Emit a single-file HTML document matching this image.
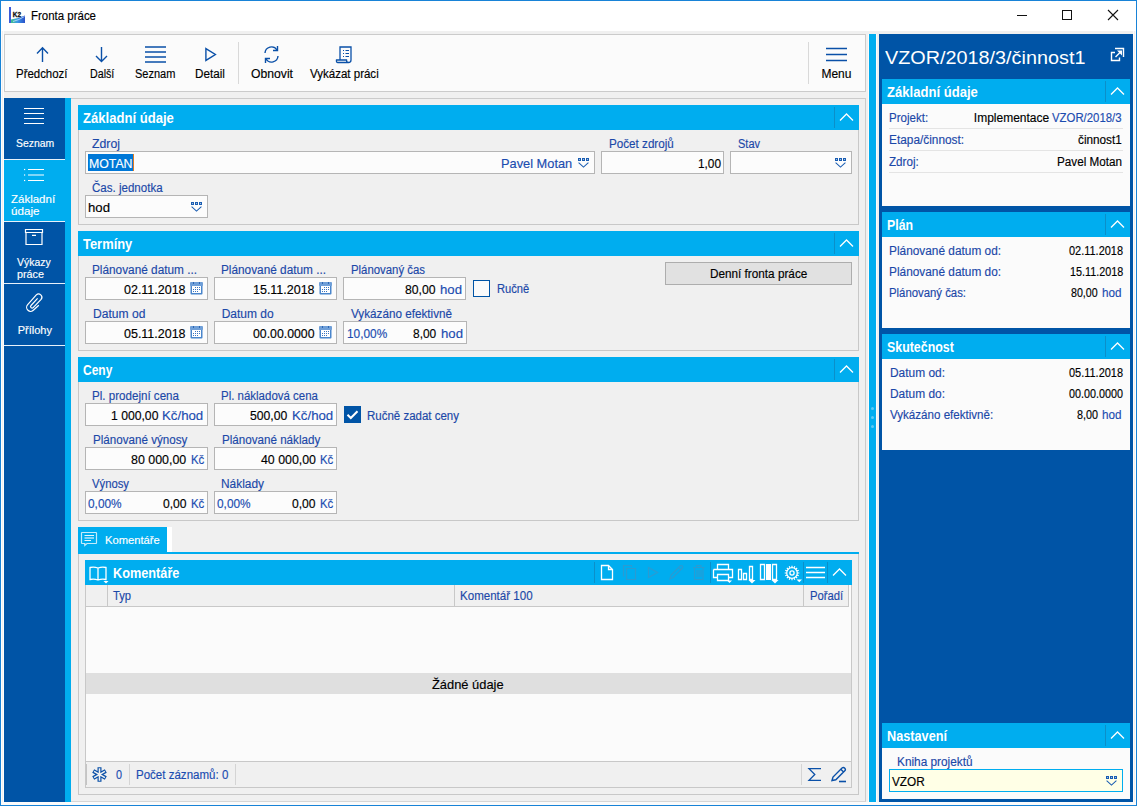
<!DOCTYPE html>
<html><head><meta charset="utf-8"><style>
html,body{margin:0;padding:0;width:1137px;height:806px;overflow:hidden;background:#f0f0f0}
body{position:relative;font-family:"Liberation Sans",sans-serif}
div,svg{position:absolute;box-sizing:border-box}
.t{white-space:nowrap;-webkit-text-stroke:0.15px currentColor}
</style></head><body>
<div style="left:0px;top:0px;width:1137px;height:806px;background:#f0f0f0;border:1px solid #1883d7;box-sizing:border-box"></div>
<div style="left:1px;top:1px;width:1135px;height:30px;background:#fff"></div>
<div style="left:1px;top:802px;width:1135px;height:3px;background:#fbfbfb"></div>
<div style="left:1px;top:31px;width:3px;height:771px;background:#fcfcfc"></div>
<div style="left:2px;top:31px;width:1px;height:771px;background:#f0f0f0"></div>
<div style="left:1133px;top:31px;width:3px;height:771px;background:#fcfcfc"></div>
<div style="left:1134px;top:31px;width:1px;height:771px;background:#f0f0f0"></div>
<svg style="left:9px;top:7px;" width="16" height="16" viewBox="0 0 16 16"><rect x="0" y="0" width="2" height="16" fill="#3a5bd9"/><defs><linearGradient id="g1" x1="0" y1="0" x2="1" y2="0"><stop offset="0" stop-color="#3fc28a"/><stop offset="0.45" stop-color="#3a9ae8"/><stop offset="1" stop-color="#2a4fc9"/></linearGradient></defs><path d="M2 12.5 Q9 11.5 16 8.5 L16 16 L2 16 Z" fill="url(#g1)"/><path d="M4 14.5 Q10 13 15.5 9.5" stroke="#d8ecff" stroke-width="0.9" fill="none" opacity="0.8"/><text x="3.8" y="10.4" font-family="Liberation Sans" font-weight="bold" font-size="6.4" fill="#111" stroke="#111" stroke-width="0.3">K2</text></svg>
<div class="t" style="left:30.80px;top:10px;font-size:12px;line-height:12px;color:#000;transform-origin:0 0;transform:scaleX(0.9552);">Fronta práce</div>
<div style="left:1017px;top:15px;width:10px;height:1px;background:#111"></div>
<div style="left:1062px;top:10px;width:10px;height:10px;border:1px solid #111;box-sizing:border-box"></div>
<svg style="left:1107px;top:9px;" width="12" height="12" viewBox="0 0 12 12"><path d="M1 1 L11 11 M11 1 L1 11" stroke="#111" stroke-width="1.1" fill="none"/></svg>
<div style="left:4px;top:34px;width:862px;height:58px;background:#fbfbfb;border:1px solid #cbcbcb;box-sizing:border-box"></div>
<div class="t" style="left:16.20px;top:68px;font-size:12px;line-height:12px;color:#000;transform-origin:0 0;transform:scaleX(0.9528);">Předchozí</div>
<div class="t" style="left:89.70px;top:68px;font-size:12px;line-height:12px;color:#000;transform-origin:0 0;transform:scaleX(0.8885);">Další</div>
<div class="t" style="left:135.00px;top:68px;font-size:12px;line-height:12px;color:#000;transform-origin:0 0;transform:scaleX(0.9182);">Seznam</div>
<div class="t" style="left:195.00px;top:68px;font-size:12px;line-height:12px;color:#000;transform-origin:0 0;transform:scaleX(0.9739);">Detail</div>
<div class="t" style="left:250.60px;top:68px;font-size:12px;line-height:12px;color:#000;transform-origin:0 0;transform:scaleX(1.0157);">Obnovit</div>
<div class="t" style="left:310.00px;top:68px;font-size:12px;line-height:12px;color:#000;transform-origin:0 0;transform:scaleX(0.9595);">Vykázat práci</div>
<div class="t" style="left:821.40px;top:68px;font-size:12px;line-height:12px;color:#000;transform-origin:0 0;">Menu</div>
<div style="left:238px;top:42px;width:1px;height:42px;background:#d9d9d9"></div>
<div style="left:808px;top:42px;width:1px;height:42px;background:#d9d9d9"></div>
<svg style="left:36px;top:46px;" width="14" height="17" viewBox="0 0 14 17"><path d="M6.5 1.5 V16 M1 7.5 L6.5 1.8 L12 7.5" stroke="#0a50a8" stroke-width="1.4" fill="none"/></svg>
<svg style="left:95px;top:46px;" width="14" height="17" viewBox="0 0 14 17"><path d="M6.5 1 V15.5 M1 10 L6.5 15.5 L12 10" stroke="#0a50a8" stroke-width="1.4" fill="none"/></svg>
<svg style="left:144px;top:45px;" width="24" height="19" viewBox="0 0 24 19"><path d="M1 2 H22 M1 7 H22 M1 12 H22 M1 17 H22" stroke="#0a50a8" stroke-width="1.4" fill="none"/></svg>
<svg style="left:203px;top:47px;" width="15" height="16" viewBox="0 0 15 16"><path d="M2.9 1.6 L12.4 7.5 L2.9 13.4 Z" stroke="#0a50a8" stroke-width="1.4" fill="none"/></svg>
<svg style="left:262px;top:45px;" width="19" height="19" viewBox="0 0 19 19"><path d="M3 8 A6.5 6.5 0 0 1 15 5 M16 11 A6.5 6.5 0 0 1 4 14" stroke="#0a50a8" stroke-width="1.4" fill="none"/><path d="M15.5 1 V5.5 H11 M3.5 18 V13.5 H8" stroke="#0a50a8" stroke-width="1.4" fill="none"/></svg>
<svg style="left:335px;top:45px;" width="19" height="19" viewBox="0 0 19 19"><path d="M5 15 V2 H16 V15 Q16 17.5 13.5 17.5 H3 Q1 17.5 1.5 15 Z M13.5 17.5 Q11.5 17.5 11.5 15 H5" stroke="#0a50a8" stroke-width="1.3" fill="none"/><path d="M8 5.5H9 M10.5 5.5H14 M8 8.5H9 M10.5 8.5H14 M8 11.5H9 M10.5 11.5H14" stroke="#0a50a8" stroke-width="1.2"/></svg>
<svg style="left:825px;top:46px;" width="24" height="17" viewBox="0 0 24 17"><path d="M1 2.5 H22 M1 8.5 H22 M1 14.5 H22" stroke="#0a50a8" stroke-width="1.4" fill="none"/></svg>
<div style="left:4px;top:98px;width:61px;height:704px;background:#0054a6"></div>
<div style="left:65px;top:98px;width:6px;height:704px;background:#00adef"></div>
<div style="left:4px;top:160px;width:67px;height:61px;background:#00adef"></div>
<div style="left:4px;top:159px;width:61px;height:1px;background:#e8f1fa"></div>
<div style="left:4px;top:221px;width:61px;height:1px;background:#e8f1fa"></div>
<div style="left:4px;top:283px;width:61px;height:1px;background:#e8f1fa"></div>
<div style="left:4px;top:345px;width:61px;height:1px;background:#e8f1fa"></div>
<svg style="left:24px;top:107px;" width="21" height="18" viewBox="0 0 21 18"><path d="M0 1.5 H20 M0 6.5 H20 M0 11.5 H20 M0 16.5 H20" stroke="#fff" stroke-width="1.2" fill="none"/></svg>
<div class="t" style="left:15.60px;top:138px;font-size:11px;line-height:11px;color:#fff;transform-origin:0 0;transform:scaleX(0.9467);">Seznam</div>
<svg style="left:22px;top:167px;" width="23" height="16" viewBox="0 0 23 16"><path d="M6 2.5 H22 M6 8 H22 M6 13.5 H22" stroke="#fff" stroke-width="1.2" fill="none"/><rect x="2" y="1.9" width="1.2" height="1.2" fill="#fff"/><rect x="2" y="7.4" width="1.2" height="1.2" fill="#fff"/><rect x="2" y="12.9" width="1.2" height="1.2" fill="#fff"/></svg>
<div class="t" style="left:11.20px;top:194px;font-size:11px;line-height:11px;color:#fff;transform-origin:0 0;transform:scaleX(1.0450);">Základní</div>
<div class="t" style="left:11.00px;top:206px;font-size:11px;line-height:11px;color:#fff;transform-origin:0 0;transform:scaleX(1.0558);">údaje</div>
<svg style="left:24px;top:228px;" width="21" height="19" viewBox="0 0 21 19"><path d="M1.5 1.5 H18.5 V4.5 H1.5 Z M2 4.5 V16.5 H18 V4.5 M8 7.3 H12" stroke="#fff" stroke-width="1.2" fill="none"/></svg>
<div class="t" style="left:16.60px;top:257px;font-size:11px;line-height:11px;color:#fff;transform-origin:0 0;transform:scaleX(0.9478);">Výkazy</div>
<div class="t" style="left:16.70px;top:269px;font-size:11px;line-height:11px;color:#fff;transform-origin:0 0;transform:scaleX(0.9818);">práce</div>
<svg style="left:25px;top:292px;" width="19" height="21" viewBox="0 0 19 21"><path d="M13.8 13.2 L8.6 18 A3.9 3.9 0 0 1 2.7 12.6 L11.3 2.9 A3.3 3.3 0 0 1 16.1 7.4 L8.2 15.6 A1.5 1.5 0 0 1 6 13.5 L12.6 6.3" stroke="#fff" stroke-width="1.2" fill="none"/></svg>
<div class="t" style="left:17.70px;top:325px;font-size:11px;line-height:11px;color:#fff;transform-origin:0 0;">Přílohy</div>
<div style="left:71px;top:98px;width:795px;height:704px;background:#f0f0f0;border-top:1px solid #cbcbcb;border-right:1px solid #cbcbcb;border-bottom:1px solid #d6d6d6"></div>
<div style="left:78px;top:105px;width:781px;height:120px;background:#f0f0f0;border:1px solid #c8c8c8"></div>
<div style="left:78px;top:105px;width:781px;height:25px;background:#00adef"></div>
<div style="left:834px;top:107px;width:1px;height:21px;background:#0b8fc9"></div>
<svg style="left:839px;top:113px;" width="15" height="9" viewBox="0 0 15 9"><path d="M1 7.5 L7.5 1 L14 7.5" stroke="#fff" stroke-width="1.3" fill="none"/></svg>
<div class="t" style="left:82.50px;top:112px;font-size:13px;line-height:13px;color:#fff;font-weight:bold;-webkit-text-stroke:0;transform-origin:0 11px;transform:scaleX(1.0055) scaleY(1.1);">Základní údaje</div>
<div class="t" style="left:92.00px;top:138px;font-size:12px;line-height:12px;color:#1b48a8;transform-origin:0 0;transform:scaleX(1.0238);">Zdroj</div>
<div style="left:85px;top:151px;width:510px;height:23px;background:#fcfcfc;border:1px solid #b5b5b5;"></div>
<div style="left:88px;top:154px;width:45px;height:17px;background:#0078d7"></div>
<div style="left:133px;top:154px;width:1px;height:17px;background:#e07b20"></div>
<div class="t" style="left:88.50px;top:158px;font-size:12px;line-height:12px;color:#fff;transform-origin:0 0;transform:scaleX(1.0247);">MOTAN</div>
<div class="t" style="left:500.60px;top:157px;font-size:13px;line-height:13px;color:#1b4cb0;transform-origin:0 0;transform:scaleX(0.9855);">Pavel Motan</div>
<svg style="left:578px;top:158px;" width="11" height="11" viewBox="0 0 11 11"><rect x="0" y="0" width="3" height="3" fill="#1a5db2"/><rect x="1" y="1" width="1" height="1" fill="#9fbfe6"/><rect x="4" y="0" width="3" height="3" fill="#1a5db2"/><rect x="5" y="1" width="1" height="1" fill="#9fbfe6"/><rect x="8" y="0" width="3" height="3" fill="#1a5db2"/><rect x="9" y="1" width="1" height="1" fill="#9fbfe6"/><path d="M0.6 4.6 L5.5 9.1 L10.4 4.6" stroke="#1a5db2" stroke-width="1.05" fill="none"/></svg>
<div class="t" style="left:608.70px;top:138px;font-size:12px;line-height:12px;color:#1b48a8;transform-origin:0 0;transform:scaleX(0.9715);">Počet zdrojů</div>
<div style="left:601px;top:151px;width:123px;height:23px;background:#fcfcfc;border:1px solid #b5b5b5;"></div>
<div class="t" style="left:697.60px;top:158px;font-size:12px;line-height:12px;color:#000;transform-origin:0 0;transform:scaleX(0.9850);">1,00</div>
<div class="t" style="left:737.50px;top:138px;font-size:12px;line-height:12px;color:#1b48a8;transform-origin:0 0;transform:scaleX(0.9167);">Stav</div>
<div style="left:730px;top:151px;width:122px;height:23px;background:#fcfcfc;border:1px solid #b5b5b5;"></div>
<svg style="left:835px;top:158px;" width="11" height="11" viewBox="0 0 11 11"><rect x="0" y="0" width="3" height="3" fill="#1a5db2"/><rect x="1" y="1" width="1" height="1" fill="#9fbfe6"/><rect x="4" y="0" width="3" height="3" fill="#1a5db2"/><rect x="5" y="1" width="1" height="1" fill="#9fbfe6"/><rect x="8" y="0" width="3" height="3" fill="#1a5db2"/><rect x="9" y="1" width="1" height="1" fill="#9fbfe6"/><path d="M0.6 4.6 L5.5 9.1 L10.4 4.6" stroke="#1a5db2" stroke-width="1.05" fill="none"/></svg>
<div class="t" style="left:92.00px;top:182px;font-size:12px;line-height:12px;color:#1b48a8;transform-origin:0 0;transform:scaleX(0.9619);">Čas. jednotka</div>
<div style="left:85px;top:195px;width:123px;height:23px;background:#fcfcfc;border:1px solid #b5b5b5;"></div>
<div class="t" style="left:88.20px;top:201px;font-size:13px;line-height:13px;color:#000;transform-origin:0 0;transform:scaleX(1.0138);">hod</div>
<svg style="left:191px;top:202px;" width="11" height="11" viewBox="0 0 11 11"><rect x="0" y="0" width="3" height="3" fill="#1a5db2"/><rect x="1" y="1" width="1" height="1" fill="#9fbfe6"/><rect x="4" y="0" width="3" height="3" fill="#1a5db2"/><rect x="5" y="1" width="1" height="1" fill="#9fbfe6"/><rect x="8" y="0" width="3" height="3" fill="#1a5db2"/><rect x="9" y="1" width="1" height="1" fill="#9fbfe6"/><path d="M0.6 4.6 L5.5 9.1 L10.4 4.6" stroke="#1a5db2" stroke-width="1.05" fill="none"/></svg>
<div style="left:78px;top:231px;width:781px;height:120px;background:#f0f0f0;border:1px solid #c8c8c8"></div>
<div style="left:78px;top:231px;width:781px;height:25px;background:#00adef"></div>
<div style="left:834px;top:233px;width:1px;height:21px;background:#0b8fc9"></div>
<svg style="left:839px;top:239px;" width="15" height="9" viewBox="0 0 15 9"><path d="M1 7.5 L7.5 1 L14 7.5" stroke="#fff" stroke-width="1.3" fill="none"/></svg>
<div class="t" style="left:82.50px;top:238px;font-size:13px;line-height:13px;color:#fff;font-weight:bold;-webkit-text-stroke:0;transform-origin:0 11px;transform:scaleX(0.9940) scaleY(1.1);">Termíny</div>
<div class="t" style="left:92.00px;top:264px;font-size:12px;line-height:12px;color:#1b48a8;transform-origin:0 0;transform:scaleX(0.9836);">Plánované datum ...</div>
<div class="t" style="left:221.40px;top:264px;font-size:12px;line-height:12px;color:#1b48a8;transform-origin:0 0;transform:scaleX(0.9836);">Plánované datum ...</div>
<div class="t" style="left:350.50px;top:264px;font-size:12px;line-height:12px;color:#1b48a8;transform-origin:0 0;transform:scaleX(0.9481);">Plánovaný čas</div>
<div style="left:85px;top:277px;width:123px;height:23px;background:#fcfcfc;border:1px solid #b5b5b5;"></div>
<div class="t" style="left:123.80px;top:284px;font-size:12px;line-height:12px;color:#000;transform-origin:0 0;transform:scaleX(1.0397);">02.11.2018</div>
<svg style="left:190px;top:282px;" width="13" height="13" viewBox="0 0 13 13"><rect x="0.5" y="0.5" width="12" height="12" rx="1" fill="#4a86cc"/><rect x="0" y="0" width="13" height="4" rx="1" fill="#6f9fd8"/><rect x="2" y="4" width="9" height="7" fill="#fff"/><rect x="5" y="5" width="1" height="1" fill="#3a74c0"/><rect x="7" y="5" width="1" height="1" fill="#3a74c0"/><rect x="9" y="5" width="1" height="1" fill="#3a74c0"/><rect x="3" y="7" width="1" height="1" fill="#3a74c0"/><rect x="5" y="7" width="1" height="1" fill="#3a74c0"/><rect x="7" y="7" width="1" height="1" fill="#3a74c0"/><rect x="9" y="7" width="1" height="1" fill="#3a74c0"/><rect x="3" y="9" width="1" height="1" fill="#3a74c0"/><rect x="5" y="9" width="1" height="1" fill="#3a74c0"/><rect x="7" y="9" width="1" height="1" fill="#3a74c0"/><rect x="3" y="0" width="1" height="2" fill="#2d66b3"/><rect x="9" y="0" width="1" height="2" fill="#2d66b3"/></svg>
<div style="left:214px;top:277px;width:123px;height:23px;background:#fcfcfc;border:1px solid #b5b5b5;"></div>
<div class="t" style="left:252.80px;top:284px;font-size:12px;line-height:12px;color:#000;transform-origin:0 0;transform:scaleX(1.0397);">15.11.2018</div>
<svg style="left:319px;top:282px;" width="13" height="13" viewBox="0 0 13 13"><rect x="0.5" y="0.5" width="12" height="12" rx="1" fill="#4a86cc"/><rect x="0" y="0" width="13" height="4" rx="1" fill="#6f9fd8"/><rect x="2" y="4" width="9" height="7" fill="#fff"/><rect x="5" y="5" width="1" height="1" fill="#3a74c0"/><rect x="7" y="5" width="1" height="1" fill="#3a74c0"/><rect x="9" y="5" width="1" height="1" fill="#3a74c0"/><rect x="3" y="7" width="1" height="1" fill="#3a74c0"/><rect x="5" y="7" width="1" height="1" fill="#3a74c0"/><rect x="7" y="7" width="1" height="1" fill="#3a74c0"/><rect x="9" y="7" width="1" height="1" fill="#3a74c0"/><rect x="3" y="9" width="1" height="1" fill="#3a74c0"/><rect x="5" y="9" width="1" height="1" fill="#3a74c0"/><rect x="7" y="9" width="1" height="1" fill="#3a74c0"/><rect x="3" y="0" width="1" height="2" fill="#2d66b3"/><rect x="9" y="0" width="1" height="2" fill="#2d66b3"/></svg>
<div style="left:343px;top:277px;width:123px;height:23px;background:#fcfcfc;border:1px solid #b5b5b5;"></div>
<div class="t" style="left:405.00px;top:284px;font-size:12px;line-height:12px;color:#000;transform-origin:0 0;transform:scaleX(1.0183);">80,00</div>
<div class="t" style="left:439.70px;top:283px;font-size:13px;line-height:13px;color:#1b4cb0;transform-origin:0 0;transform:scaleX(1.0138);">hod</div>
<div style="left:473px;top:280px;width:17px;height:17px;background:#fbfbfb;border:1px solid #0054a6"></div>
<div class="t" style="left:496.70px;top:283px;font-size:12px;line-height:12px;color:#1b48a8;transform-origin:0 0;transform:scaleX(0.9308);">Ručně</div>
<div style="left:665px;top:262px;width:187px;height:23px;background:#e1e1e1;border:1px solid #adadad"></div>
<div class="t" style="left:709.50px;top:268px;font-size:12px;line-height:12px;color:#000;transform-origin:0 0;transform:scaleX(0.9789);">Denní fronta práce</div>
<div class="t" style="left:92.50px;top:308px;font-size:12px;line-height:12px;color:#1b48a8;transform-origin:0 0;transform:scaleX(1.0067);">Datum od</div>
<div class="t" style="left:221.70px;top:308px;font-size:12px;line-height:12px;color:#1b48a8;transform-origin:0 0;">Datum do</div>
<div class="t" style="left:350.50px;top:308px;font-size:12px;line-height:12px;color:#1b48a8;transform-origin:0 0;transform:scaleX(0.9749);">Vykázáno efektivně</div>
<div style="left:85px;top:321px;width:123px;height:23px;background:#fcfcfc;border:1px solid #b5b5b5;"></div>
<div class="t" style="left:123.80px;top:328px;font-size:12px;line-height:12px;color:#000;transform-origin:0 0;transform:scaleX(1.0397);">05.11.2018</div>
<svg style="left:190px;top:326px;" width="13" height="13" viewBox="0 0 13 13"><rect x="0.5" y="0.5" width="12" height="12" rx="1" fill="#4a86cc"/><rect x="0" y="0" width="13" height="4" rx="1" fill="#6f9fd8"/><rect x="2" y="4" width="9" height="7" fill="#fff"/><rect x="5" y="5" width="1" height="1" fill="#3a74c0"/><rect x="7" y="5" width="1" height="1" fill="#3a74c0"/><rect x="9" y="5" width="1" height="1" fill="#3a74c0"/><rect x="3" y="7" width="1" height="1" fill="#3a74c0"/><rect x="5" y="7" width="1" height="1" fill="#3a74c0"/><rect x="7" y="7" width="1" height="1" fill="#3a74c0"/><rect x="9" y="7" width="1" height="1" fill="#3a74c0"/><rect x="3" y="9" width="1" height="1" fill="#3a74c0"/><rect x="5" y="9" width="1" height="1" fill="#3a74c0"/><rect x="7" y="9" width="1" height="1" fill="#3a74c0"/><rect x="3" y="0" width="1" height="2" fill="#2d66b3"/><rect x="9" y="0" width="1" height="2" fill="#2d66b3"/></svg>
<div style="left:214px;top:321px;width:123px;height:23px;background:#fcfcfc;border:1px solid #b5b5b5;"></div>
<div class="t" style="left:252.80px;top:328px;font-size:12px;line-height:12px;color:#000;transform-origin:0 0;transform:scaleX(1.0241);">00.00.0000</div>
<svg style="left:319px;top:326px;" width="13" height="13" viewBox="0 0 13 13"><rect x="0.5" y="0.5" width="12" height="12" rx="1" fill="#4a86cc"/><rect x="0" y="0" width="13" height="4" rx="1" fill="#6f9fd8"/><rect x="2" y="4" width="9" height="7" fill="#fff"/><rect x="5" y="5" width="1" height="1" fill="#3a74c0"/><rect x="7" y="5" width="1" height="1" fill="#3a74c0"/><rect x="9" y="5" width="1" height="1" fill="#3a74c0"/><rect x="3" y="7" width="1" height="1" fill="#3a74c0"/><rect x="5" y="7" width="1" height="1" fill="#3a74c0"/><rect x="7" y="7" width="1" height="1" fill="#3a74c0"/><rect x="9" y="7" width="1" height="1" fill="#3a74c0"/><rect x="3" y="9" width="1" height="1" fill="#3a74c0"/><rect x="5" y="9" width="1" height="1" fill="#3a74c0"/><rect x="7" y="9" width="1" height="1" fill="#3a74c0"/><rect x="3" y="0" width="1" height="2" fill="#2d66b3"/><rect x="9" y="0" width="1" height="2" fill="#2d66b3"/></svg>
<div style="left:343px;top:321px;width:124px;height:23px;background:#fcfcfc;border:1px solid #b5b5b5;"></div>
<div class="t" style="left:347.00px;top:328px;font-size:12px;line-height:12px;color:#1b4cb0;transform-origin:0 0;transform:scaleX(0.9877);">10,00%</div>
<div class="t" style="left:413.40px;top:328px;font-size:12px;line-height:12px;color:#000;transform-origin:0 0;transform:scaleX(0.9936);">8,00</div>
<div class="t" style="left:440.70px;top:327px;font-size:13px;line-height:13px;color:#1b4cb0;transform-origin:0 0;transform:scaleX(1.0138);">hod</div>
<div style="left:78px;top:357px;width:781px;height:164px;background:#f0f0f0;border:1px solid #c8c8c8"></div>
<div style="left:78px;top:357px;width:781px;height:25px;background:#00adef"></div>
<div style="left:834px;top:359px;width:1px;height:21px;background:#0b8fc9"></div>
<svg style="left:839px;top:365px;" width="15" height="9" viewBox="0 0 15 9"><path d="M1 7.5 L7.5 1 L14 7.5" stroke="#fff" stroke-width="1.3" fill="none"/></svg>
<div class="t" style="left:82.50px;top:364px;font-size:13px;line-height:13px;color:#fff;font-weight:bold;-webkit-text-stroke:0;transform-origin:0 11px;transform:scaleX(0.9214) scaleY(1.1);">Ceny</div>
<div class="t" style="left:92.00px;top:390px;font-size:12px;line-height:12px;color:#1b48a8;transform-origin:0 0;transform:scaleX(0.9656);">Pl. prodejní cena</div>
<div class="t" style="left:221.40px;top:390px;font-size:12px;line-height:12px;color:#1b48a8;transform-origin:0 0;transform:scaleX(0.9561);">Pl. nákladová cena</div>
<div style="left:85px;top:403px;width:123px;height:23px;background:#fcfcfc;border:1px solid #b5b5b5;"></div>
<div class="t" style="left:110.80px;top:410px;font-size:12px;line-height:12px;color:#000;transform-origin:0 0;transform:scaleX(1.0150);">1 000,00</div>
<div class="t" style="left:162.30px;top:409px;font-size:13px;line-height:13px;color:#1b4cb0;transform-origin:0 0;transform:scaleX(1.0185);">Kč/hod</div>
<div style="left:214px;top:403px;width:123px;height:23px;background:#fcfcfc;border:1px solid #b5b5b5;"></div>
<div class="t" style="left:250.10px;top:410px;font-size:12px;line-height:12px;color:#000;transform-origin:0 0;transform:scaleX(1.0163);">500,00</div>
<div class="t" style="left:291.50px;top:409px;font-size:13px;line-height:13px;color:#1b4cb0;transform-origin:0 0;transform:scaleX(1.0185);">Kč/hod</div>
<svg style="left:344px;top:406px;" width="17" height="17" viewBox="0 0 17 17"><rect x="0" y="0" width="17" height="17" fill="#0054a6"/><path d="M3.5 8.8 L6.8 12 L13.5 5.3" stroke="#fff" stroke-width="2" fill="none"/></svg>
<div class="t" style="left:367.00px;top:410px;font-size:12px;line-height:12px;color:#1b48a8;transform-origin:0 0;transform:scaleX(0.9578);">Ručně zadat ceny</div>
<div class="t" style="left:92.50px;top:434px;font-size:12px;line-height:12px;color:#1b48a8;transform-origin:0 0;transform:scaleX(0.9682);">Plánované výnosy</div>
<div class="t" style="left:221.70px;top:434px;font-size:12px;line-height:12px;color:#1b48a8;transform-origin:0 0;transform:scaleX(0.9684);">Plánované náklady</div>
<div style="left:85px;top:447px;width:123px;height:23px;background:#fcfcfc;border:1px solid #b5b5b5;"></div>
<div class="t" style="left:131.40px;top:454px;font-size:12px;line-height:12px;color:#000;transform-origin:0 0;transform:scaleX(1.0356);">80 000,00</div>
<div class="t" style="left:190.60px;top:454px;font-size:12px;line-height:12px;color:#1b4cb0;transform-origin:0 0;transform:scaleX(0.9500);">Kč</div>
<div style="left:214px;top:447px;width:123px;height:23px;background:#fcfcfc;border:1px solid #b5b5b5;"></div>
<div class="t" style="left:260.50px;top:454px;font-size:12px;line-height:12px;color:#000;transform-origin:0 0;transform:scaleX(1.0300);">40 000,00</div>
<div class="t" style="left:319.80px;top:454px;font-size:12px;line-height:12px;color:#1b4cb0;transform-origin:0 0;transform:scaleX(0.9500);">Kč</div>
<div class="t" style="left:92.00px;top:478px;font-size:12px;line-height:12px;color:#1b48a8;transform-origin:0 0;transform:scaleX(0.9403);">Výnosy</div>
<div class="t" style="left:221.40px;top:478px;font-size:12px;line-height:12px;color:#1b48a8;transform-origin:0 0;transform:scaleX(0.9919);">Náklady</div>
<div style="left:85px;top:491px;width:123px;height:23px;background:#fcfcfc;border:1px solid #b5b5b5;"></div>
<div class="t" style="left:88.40px;top:498px;font-size:12px;line-height:12px;color:#1b4cb0;transform-origin:0 0;transform:scaleX(0.9868);">0,00%</div>
<div class="t" style="left:163.20px;top:498px;font-size:12px;line-height:12px;color:#000;transform-origin:0 0;transform:scaleX(1.0107);">0,00</div>
<div class="t" style="left:190.70px;top:498px;font-size:12px;line-height:12px;color:#1b4cb0;transform-origin:0 0;transform:scaleX(0.9500);">Kč</div>
<div style="left:214px;top:491px;width:123px;height:23px;background:#fcfcfc;border:1px solid #b5b5b5;"></div>
<div class="t" style="left:217.20px;top:498px;font-size:12px;line-height:12px;color:#1b4cb0;transform-origin:0 0;transform:scaleX(0.9868);">0,00%</div>
<div class="t" style="left:291.90px;top:498px;font-size:12px;line-height:12px;color:#000;transform-origin:0 0;transform:scaleX(1.0107);">0,00</div>
<div class="t" style="left:319.80px;top:498px;font-size:12px;line-height:12px;color:#1b4cb0;transform-origin:0 0;transform:scaleX(0.9500);">Kč</div>
<div style="left:78px;top:527px;width:89px;height:25px;background:#00adef"></div>
<div style="left:167px;top:527px;width:5px;height:25px;background:#ffffff"></div>
<div style="left:78px;top:552px;width:781px;height:2px;background:#00adef"></div>
<div style="left:78px;top:554px;width:781px;height:241px;background:#f0f0f0;border:1px solid #c8c8c8;border-top:none"></div>
<svg style="left:80px;top:531px;" width="19" height="17" viewBox="0 0 19 17"><path d="M2 1.5 H16 Q16.5 1.5 16.5 2 V12 Q16.5 12.5 16 12.5 H7 L4.8 14.5 V12.5 H2 Q1.5 12.5 1.5 12 V2 Q1.5 1.5 2 1.5 Z" stroke="#c4ebfb" stroke-width="1.2" fill="none"/><path d="M4.5 4.5 H14 M4.5 9.5 H11" stroke="#e8f7fe" stroke-width="1"/><path d="M4.5 7 H14" stroke="#a8e2f9" stroke-width="1.6"/></svg>
<div class="t" style="left:105.20px;top:535px;font-size:11px;line-height:11px;color:#fff;transform-origin:0 0;transform:scaleX(1.0186);">Komentáře</div>
<div style="left:85px;top:560px;width:767px;height:25px;background:#00adef"></div>
<svg style="left:88px;top:565px;" width="22" height="20" viewBox="0 0 22 20"><path d="M10 3 Q6 1.5 2 2.5 V14.5 Q6 13.5 10 15 Q14 13.5 18 14.5 V2.5 Q14 1.5 10 3 Z M10 3 V15" stroke="#fff" stroke-width="1.3" fill="none"/><path d="M15.5 16 H20.5 L18 18.5 Z" fill="#fff"/></svg>
<div class="t" style="left:112.60px;top:567px;font-size:13px;line-height:13px;color:#fff;font-weight:bold;-webkit-text-stroke:0;transform-origin:0 11px;transform:scaleX(0.9779) scaleY(1.1);">Komentáře</div>
<div style="left:594px;top:562px;width:1px;height:21px;background:#0b8fc9"></div>
<div style="left:710px;top:562px;width:1px;height:21px;background:#0b8fc9"></div>
<div style="left:803px;top:562px;width:1px;height:21px;background:#0b8fc9"></div>
<div style="left:827px;top:562px;width:1px;height:21px;background:#0b8fc9"></div>
<svg style="left:600px;top:564px;" width="14" height="17" viewBox="0 0 14 17"><path d="M1.5 1.5 H8.5 L12.5 5.5 V15.5 H1.5 Z M8.5 1.5 V5.5 H12.5" stroke="#fff" stroke-width="1.3" fill="none"/></svg>
<svg style="left:622px;top:564px;" width="16" height="17" viewBox="0 0 16 17"><path d="M1.5 12.5 V1.5 H9.5 V3 M4.5 4.5 H13.5 V15.5 H4.5 Z" stroke="#2a9bd2" stroke-width="1.2" fill="none"/></svg>
<svg style="left:647px;top:566px;" width="12" height="14" viewBox="0 0 12 14"><path d="M1.5 1.5 L10.5 6.5 L1.5 11.5 Z" stroke="#2a9bd2" stroke-width="1.2" fill="none"/></svg>
<svg style="left:668px;top:564px;" width="16" height="17" viewBox="0 0 16 17"><path d="M2 15 L3 11 L12 2 Q13.5 1 14.5 2.2 Q15.2 3.5 14 4.5 L5 13.5 Z M10.5 3.5 L13 6" stroke="#2a9bd2" stroke-width="1.2" fill="none"/></svg>
<svg style="left:692px;top:564px;" width="14" height="17" viewBox="0 0 14 17"><path d="M1 3.5 H12.5 M4.5 3.5 V1.5 H9 V3.5 M2.5 3.5 V15.5 H11 V3.5 M5 6 V13 M7 6 V13 M9 6 V13" stroke="#2a9bd2" stroke-width="1.1" fill="none"/></svg>
<svg style="left:712px;top:563px;" width="22" height="21" viewBox="0 0 22 21"><path d="M5.5 6.5 V1.5 H16.5 V6.5 M1.5 6.5 H20.5 V14.5 H16.5 M5.5 14.5 H1.5 V6.5 M5.5 11.5 H16.5 V17.5 H5.5 Z" stroke="#fff" stroke-width="1.3" fill="none"/><path d="M15 17.5 H20 L17.5 20 Z" fill="#fff"/></svg>
<svg style="left:737px;top:564px;" width="21" height="20" viewBox="0 0 21 20"><path d="M1.5 5.5 H4.5 V15.5 H1.5 Z M6.5 9.5 H9.5 V15.5 H6.5 Z M12.5 2.5 H15.5 V15.5 H12.5 Z" stroke="#fff" stroke-width="1.3" fill="none"/><path d="M11.5 16 H18.5 L15 19.5 Z" fill="#fff"/></svg>
<svg style="left:759px;top:563px;" width="21" height="21" viewBox="0 0 21 21"><path d="M1.5 1.5 H5.5 V16.5 H1.5 Z M13.5 1.5 H17.5 V16.5 H13.5 Z" stroke="#fff" stroke-width="1.3" fill="none"/><rect x="7" y="1" width="5" height="16" fill="#fff"/><path d="M12.5 17 H19.5 L16 20.5 Z" fill="#fff"/></svg>
<svg style="left:784px;top:565px;" width="20" height="19" viewBox="0 0 20 19"><circle cx="8" cy="8" r="5.3" stroke="#fff" stroke-width="1.3" fill="none"/><circle cx="8" cy="8" r="2.1" stroke="#fff" stroke-width="1.3" fill="none"/><path d="M13.60 8.00 L15.30 8.00 M13.17 10.14 L14.74 10.79 M11.96 11.96 L13.16 13.16 M10.14 13.17 L10.79 14.74 M8.00 13.60 L8.00 15.30 M5.86 13.17 L5.21 14.74 M4.04 11.96 L2.84 13.16 M2.83 10.14 L1.26 10.79 M2.40 8.00 L0.70 8.00 M2.83 5.86 L1.26 5.21 M4.04 4.04 L2.84 2.84 M5.86 2.83 L5.21 1.26 M8.00 2.40 L8.00 0.70 M10.14 2.83 L10.79 1.26 M11.96 4.04 L13.16 2.84 M13.17 5.86 L14.74 5.21 " stroke="#fff" stroke-width="1.2" fill="none"/><path d="M12.5 14.5 H18 L15.25 17.2 Z" fill="#fff"/></svg>
<svg style="left:805px;top:565px;" width="22" height="16" viewBox="0 0 22 16"><path d="M1 2.5 H20 M1 7.5 H20 M1 12.5 H20" stroke="#fff" stroke-width="1.4" fill="none"/></svg>
<svg style="left:832px;top:568px;" width="15" height="9" viewBox="0 0 15 9"><path d="M1 7.5 L7.5 1 L14 7.5" stroke="#fff" stroke-width="1.3" fill="none"/></svg>
<div style="left:85px;top:585px;width:767px;height:203px;background:#fbfbfb;border:1px solid #c8c8c8;border-top:none"></div>
<div style="left:86px;top:585px;width:765px;height:22px;background:#f0f0f0;border-bottom:1px solid #c8c8c8"></div>
<div style="left:107px;top:585px;width:1px;height:21px;background:#c8c8c8"></div>
<div style="left:454px;top:585px;width:1px;height:21px;background:#c8c8c8"></div>
<div style="left:803px;top:585px;width:1px;height:21px;background:#c8c8c8"></div>
<div style="left:848px;top:585px;width:1px;height:22px;background:#c8c8c8"></div>
<div style="left:849px;top:585px;width:2px;height:22px;background:#fbfbfb"></div>
<div class="t" style="left:113.30px;top:590px;font-size:12px;line-height:12px;color:#1b48a8;transform-origin:0 0;transform:scaleX(0.9302);">Typ</div>
<div class="t" style="left:460.30px;top:590px;font-size:12px;line-height:12px;color:#1b48a8;transform-origin:0 0;transform:scaleX(0.9629);">Komentář 100</div>
<div class="t" style="left:809.70px;top:590px;font-size:12px;line-height:12px;color:#1b48a8;transform-origin:0 0;transform:scaleX(0.9392);">Pořadí</div>
<div style="left:86px;top:673px;width:765px;height:21px;background:#dfdfdf"></div>
<div class="t" style="left:431.90px;top:678px;font-size:13px;line-height:13px;color:#000;transform-origin:0 0;transform:scaleX(0.9903);">Žádné údaje</div>
<div style="left:86px;top:761px;width:765px;height:26px;background:#f0f0f0;border-top:1px solid #c8c8c8"></div>
<div style="left:86px;top:764px;width:1px;height:21px;background:#c4c4c4"></div>
<div style="left:129px;top:764px;width:1px;height:21px;background:#d4d4d4"></div>
<div style="left:235px;top:764px;width:1px;height:21px;background:#d4d4d4"></div>
<div style="left:801px;top:764px;width:1px;height:21px;background:#d4d4d4"></div>
<svg style="left:91px;top:766px;" width="17" height="17" viewBox="0 0 17 17"><path d="M8.5 1.2 V15.8 M2.2 4.9 L14.8 12.1 M14.8 4.9 L2.2 12.1" stroke="#0a50a8" stroke-width="4" fill="none"/><path d="M8.5 2.2 V14.8 M3.1 5.4 L13.9 11.6 M13.9 5.4 L3.1 11.6" stroke="#f0f0f0" stroke-width="1.6" fill="none"/></svg>
<div class="t" style="left:116.30px;top:769px;font-size:12px;line-height:12px;color:#1b4cb0;transform-origin:0 0;transform:scaleX(0.9023);">0</div>
<div class="t" style="left:136.00px;top:769px;font-size:12px;line-height:12px;color:#1b4cb0;transform-origin:0 0;transform:scaleX(0.9610);">Počet záznamů: 0</div>
<svg style="left:807px;top:767px;" width="15" height="15" viewBox="0 0 15 15"><path d="M14 1.6 H2 L7.8 7.5 L2 13.4 H14" stroke="#0a50a8" stroke-width="1.3" fill="none"/></svg>
<svg style="left:830px;top:766px;" width="17" height="17" viewBox="0 0 17 17"><path d="M2 14.5 L3 11 L12 2 Q13.5 0.8 14.8 2.2 Q16 3.6 14.8 4.8 L5.8 13.8 Z M10.8 3.2 L13.8 6.2" stroke="#0a50a8" stroke-width="1.4" fill="none"/><path d="M9 15.5 H16" stroke="#0a50a8" stroke-width="1.6"/></svg>
<div style="left:866px;top:34px;width:13px;height:768px;background:#f0f0f0"></div>
<div style="left:868px;top:34px;width:1px;height:768px;background:#fbfbfb"></div>
<div style="left:876px;top:34px;width:1px;height:768px;background:#fbfbfb"></div>
<div style="left:869px;top:34px;width:7px;height:768px;background:#00adef"></div>
<div style="left:871px;top:407px;width:3px;height:3px;border-radius:50%;background:#5ccaf4"></div>
<div style="left:871px;top:416px;width:3px;height:3px;border-radius:50%;background:#5ccaf4"></div>
<div style="left:871px;top:425px;width:3px;height:3px;border-radius:50%;background:#5ccaf4"></div>
<div style="left:879px;top:34px;width:254px;height:768px;background:#0054a6"></div>
<div class="t" style="left:885.40px;top:49px;font-size:18px;line-height:18px;color:#fff;transform-origin:0 0;transform:scaleX(1.1005);-webkit-text-stroke:0;">VZOR/2018/3/činnost1</div>
<svg style="left:1110px;top:47px;" width="16" height="16" viewBox="0 0 16 16"><path d="M5 1.5 H13.5 V10 M5 5.5 H1.5 V13.5 H9.5 V10.5" stroke="#fff" stroke-width="1.4" fill="none"/><path d="M5.5 10 L10.5 5" stroke="#fff" stroke-width="1.4"/><path d="M7 3.5 H12 V8.5 Z" fill="#fff"/></svg>
<div style="left:882px;top:79px;width:248px;height:25px;background:#00adef"></div>
<div style="left:1105px;top:81px;width:1px;height:21px;background:#0b8fc9"></div>
<svg style="left:1110px;top:87px;" width="15" height="9" viewBox="0 0 15 9"><path d="M1 7.5 L7.5 1 L14 7.5" stroke="#fff" stroke-width="1.3" fill="none"/></svg>
<div class="t" style="left:887.30px;top:86px;font-size:13px;line-height:13px;color:#fff;font-weight:bold;-webkit-text-stroke:0;transform-origin:0 11px;transform:scaleX(1.0055) scaleY(1.1);">Základní údaje</div>
<div style="left:882px;top:104px;width:248px;height:102px;background:#fbfbfb"></div>
<div class="t" style="left:889.30px;top:112px;font-size:12px;line-height:12px;color:#1b48a8;transform-origin:0 0;transform:scaleX(0.9607);">Projekt:</div>
<div class="t" style="left:973.80px;top:112px;font-size:12px;line-height:12px;color:#000;transform-origin:0 0;">Implementace</div>
<div class="t" style="left:1052.40px;top:112px;font-size:12px;line-height:12px;color:#1b4cb0;transform-origin:0 0;transform:scaleX(0.9482);">VZOR/2018/3</div>
<div style="left:889px;top:128px;width:234px;height:1px;background:#e4e4e4"></div>
<div class="t" style="left:889.30px;top:134px;font-size:12px;line-height:12px;color:#1b48a8;transform-origin:0 0;transform:scaleX(0.9875);">Etapa/činnost:</div>
<div class="t" style="left:1078.20px;top:134px;font-size:12px;line-height:12px;color:#000;transform-origin:0 0;transform:scaleX(0.9799);">činnost1</div>
<div style="left:889px;top:150px;width:234px;height:1px;background:#e4e4e4"></div>
<div class="t" style="left:889.30px;top:156px;font-size:12px;line-height:12px;color:#1b48a8;transform-origin:0 0;transform:scaleX(0.9707);">Zdroj:</div>
<div class="t" style="left:1057.40px;top:156px;font-size:12px;line-height:12px;color:#000;transform-origin:0 0;transform:scaleX(0.9745);">Pavel Motan</div>
<div style="left:889px;top:172px;width:234px;height:1px;background:#e4e4e4"></div>
<div style="left:882px;top:212px;width:248px;height:25px;background:#00adef"></div>
<div style="left:1105px;top:214px;width:1px;height:21px;background:#0b8fc9"></div>
<svg style="left:1110px;top:220px;" width="15" height="9" viewBox="0 0 15 9"><path d="M1 7.5 L7.5 1 L14 7.5" stroke="#fff" stroke-width="1.3" fill="none"/></svg>
<div class="t" style="left:887.30px;top:219px;font-size:13px;line-height:13px;color:#fff;font-weight:bold;-webkit-text-stroke:0;transform-origin:0 11px;transform:scaleX(0.9472) scaleY(1.1);">Plán</div>
<div style="left:882px;top:237px;width:248px;height:91px;background:#fbfbfb"></div>
<div class="t" style="left:889.30px;top:245px;font-size:12px;line-height:12px;color:#1b48a8;transform-origin:0 0;transform:scaleX(0.9877);">Plánované datum od:</div>
<div class="t" style="left:1069.00px;top:245px;font-size:12px;line-height:12px;color:#000;transform-origin:0 0;transform:scaleX(0.9129);">02.11.2018</div>
<div class="t" style="left:889.30px;top:266px;font-size:12px;line-height:12px;color:#1b48a8;transform-origin:0 0;transform:scaleX(0.9877);">Plánované datum do:</div>
<div class="t" style="left:1069.80px;top:266px;font-size:12px;line-height:12px;color:#000;transform-origin:0 0;transform:scaleX(0.8994);">15.11.2018</div>
<div class="t" style="left:889.30px;top:287px;font-size:12px;line-height:12px;color:#1b48a8;transform-origin:0 0;transform:scaleX(0.9459);">Plánovaný čas:</div>
<div class="t" style="left:1071.00px;top:287px;font-size:12px;line-height:12px;color:#000;transform-origin:0 0;transform:scaleX(0.8885);">80,00</div>
<div class="t" style="left:1102.00px;top:287px;font-size:12px;line-height:12px;color:#1b4cb0;transform-origin:0 0;transform:scaleX(0.9750);">hod</div>
<div style="left:882px;top:334px;width:248px;height:25px;background:#00adef"></div>
<div style="left:1105px;top:336px;width:1px;height:21px;background:#0b8fc9"></div>
<svg style="left:1110px;top:342px;" width="15" height="9" viewBox="0 0 15 9"><path d="M1 7.5 L7.5 1 L14 7.5" stroke="#fff" stroke-width="1.3" fill="none"/></svg>
<div class="t" style="left:887.30px;top:341px;font-size:13px;line-height:13px;color:#fff;font-weight:bold;-webkit-text-stroke:0;transform-origin:0 11px;transform:scaleX(0.9536) scaleY(1.1);">Skutečnost</div>
<div style="left:882px;top:359px;width:248px;height:91px;background:#fbfbfb"></div>
<div class="t" style="left:889.60px;top:367px;font-size:12px;line-height:12px;color:#1b48a8;transform-origin:0 0;transform:scaleX(0.9937);">Datum od:</div>
<div class="t" style="left:1069.00px;top:367px;font-size:12px;line-height:12px;color:#000;transform-origin:0 0;transform:scaleX(0.9129);">05.11.2018</div>
<div class="t" style="left:889.60px;top:388px;font-size:12px;line-height:12px;color:#1b48a8;transform-origin:0 0;transform:scaleX(0.9937);">Datum do:</div>
<div class="t" style="left:1069.00px;top:388px;font-size:12px;line-height:12px;color:#000;transform-origin:0 0;transform:scaleX(0.8993);">00.00.0000</div>
<div class="t" style="left:889.60px;top:409px;font-size:12px;line-height:12px;color:#1b48a8;transform-origin:0 0;transform:scaleX(0.9649);">Vykázáno efektivně:</div>
<div class="t" style="left:1076.70px;top:409px;font-size:12px;line-height:12px;color:#000;transform-origin:0 0;transform:scaleX(0.8994);">8,00</div>
<div class="t" style="left:1102.00px;top:409px;font-size:12px;line-height:12px;color:#1b4cb0;transform-origin:0 0;transform:scaleX(0.9750);">hod</div>
<div style="left:882px;top:723px;width:248px;height:25px;background:#00adef"></div>
<div style="left:1105px;top:725px;width:1px;height:21px;background:#0b8fc9"></div>
<svg style="left:1110px;top:731px;" width="15" height="9" viewBox="0 0 15 9"><path d="M1 7.5 L7.5 1 L14 7.5" stroke="#fff" stroke-width="1.3" fill="none"/></svg>
<div class="t" style="left:887.30px;top:730px;font-size:13px;line-height:13px;color:#fff;font-weight:bold;-webkit-text-stroke:0;transform-origin:0 11px;transform:scaleX(0.9773) scaleY(1.1);">Nastavení</div>
<div style="left:882px;top:748px;width:248px;height:51px;background:#fbfbfb"></div>
<div class="t" style="left:896.90px;top:756px;font-size:12px;line-height:12px;color:#1b48a8;transform-origin:0 0;transform:scaleX(0.9844);">Kniha projektů</div>
<div style="left:889px;top:769px;width:234px;height:23px;background:#ffffe6;border:1px solid #00adef"></div>
<div class="t" style="left:892.00px;top:776px;font-size:12px;line-height:12px;color:#000;transform-origin:0 0;transform:scaleX(0.9835);">VZOR</div>
<svg style="left:1106px;top:776px;" width="11" height="11" viewBox="0 0 11 11"><rect x="0" y="0" width="3" height="3" fill="#1a5db2"/><rect x="1" y="1" width="1" height="1" fill="#9fbfe6"/><rect x="4" y="0" width="3" height="3" fill="#1a5db2"/><rect x="5" y="1" width="1" height="1" fill="#9fbfe6"/><rect x="8" y="0" width="3" height="3" fill="#1a5db2"/><rect x="9" y="1" width="1" height="1" fill="#9fbfe6"/><path d="M0.6 4.6 L5.5 9.1 L10.4 4.6" stroke="#1a5db2" stroke-width="1.05" fill="none"/></svg>
</body></html>
